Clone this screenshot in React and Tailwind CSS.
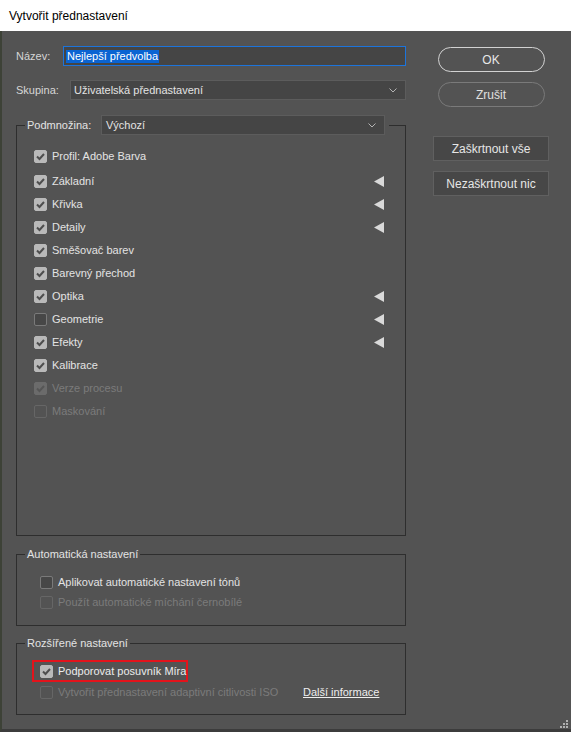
import React from "react";

const font = "font-['Liberation_Sans',Arial,sans-serif]";

function Check({ checked, disabled }) {
  let box = "bg-[#b9b9b9] border border-[#b9b9b9]";
  let stroke = "#4e4e4e";
  if (!checked && !disabled) box = "bg-[#474747] border border-[#7a7a7a]";
  if (checked && disabled) {
    box = "bg-[#6b6b6b] border border-[#6b6b6b]";
    stroke = "#565656";
  }
  if (!checked && disabled) box = "border border-[#666666]";
  return (
    <span className={`w-[13px] h-[13px] rounded-[2px] flex items-center justify-center shrink-0 ${box}`}>
      {checked && (
        <svg width="11" height="11" viewBox="0 0 11 11">
          <polyline points="2,5.5 4.5,8 9,3" fill="none" stroke={stroke} strokeWidth="2" />
        </svg>
      )}
    </span>
  );
}

function Chevron() {
  return (
    <svg width="8" height="5" viewBox="0 0 8 5" className="shrink-0">
      <polyline points="0.5,0.5 4,4 7.5,0.5" fill="none" stroke="#b4b4b4" strokeWidth="1" />
    </svg>
  );
}

function Triangle() {
  return (
    <svg width="10" height="11" viewBox="0 0 10 11" className="ml-auto">
      <polygon points="10,0 10,11 0,5.5" fill="#d9d9d9" />
    </svg>
  );
}

const subset = [
  { label: "Profil: Adobe Barva", checked: true },
  { label: "Základní", checked: true, arrow: true },
  { label: "Křivka", checked: true, arrow: true },
  { label: "Detaily", checked: true, arrow: true },
  { label: "Směšovač barev", checked: true },
  { label: "Barevný přechod", checked: true },
  { label: "Optika", checked: true, arrow: true },
  { label: "Geometrie", checked: false, arrow: true },
  { label: "Efekty", checked: true, arrow: true },
  { label: "Kalibrace", checked: true },
  { label: "Verze procesu", checked: true, disabled: true },
  { label: "Maskování", checked: false, disabled: true },
];

export default function App() {
  return (
    <div className={`w-[571px] h-[732px] bg-[#535353] flex flex-col text-[11px] text-[#e3e3e3] whitespace-nowrap ${font}`}>
      {/* Title bar */}
      <div className="h-[31px] bg-white flex items-center pl-[9px] text-[12px] text-black shrink-0">
        Vytvořit přednastavení
      </div>

      <div className="flex flex-1 border-l-2 border-l-[#3d4237] border-b-[3px] border-b-[#3c3c3c] relative">
        {/* Left column */}
        <div className="w-[404px] pl-[14px] flex flex-col">
          <div className="mt-[15px] h-[20px] flex items-center">
            <span className="w-[47px] text-[#d6d6d6]">Název:</span>
            <div className="flex-1 h-[20px] border border-[#1c74dc] bg-[#454545] flex items-center pl-[2px]">
              <span className="bg-[#0a64d2] text-white leading-[13px] px-[1px]">Nejlepší předvolba</span>
            </div>
          </div>

          <div className="mt-[14px] h-[20px] flex items-center">
            <span className="w-[54px] text-[#d6d6d6]">Skupina:</span>
            <div className="flex-1 h-[20px] border border-[#5c5c5c] bg-[#454545] flex items-center pl-[3px] pr-[8px]">
              <span className="flex-1">Uživatelská přednastavení</span>
              <Chevron />
            </div>
          </div>

          {/* Podmnožina */}
          <fieldset className="mt-[15px] h-[421px] border border-[#2e2e2e] min-w-0">
            <legend className="ml-[8px] px-[2px] w-[364px] h-[20px] flex items-center">
              <span className="w-[74px]">Podmnožina:</span>
              <div className="w-[284px] h-[20px] border border-[#5c5c5c] bg-[#454545] flex items-center pl-[4px] pr-[8px]">
                <span className="flex-1">Výchozí</span>
                <Chevron />
              </div>
            </legend>
            <div className="pt-[10px] pl-[17px] pr-[21px] flex flex-col">
              {subset.map((r, i) => (
                <div key={r.label} className={`h-[23px] flex items-center ${i === 0 ? "mb-[2px]" : ""}`}>
                  <Check checked={r.checked} disabled={r.disabled} />
                  <span className={`ml-[5px] ${r.disabled ? "text-[#7b7b7b]" : ""}`}>{r.label}</span>
                  {r.arrow && <Triangle />}
                </div>
              ))}
            </div>
          </fieldset>

          {/* Automatická nastavení */}
          <fieldset className="mt-[12px] h-[78px] border border-[#2e2e2e] min-w-0">
            <legend className="ml-[8px] px-[2px] h-[13px] leading-[13px]">Automatická nastavení</legend>
            <div className="pt-[11px] pl-[23px] flex flex-col">
              <div className="h-[20px] flex items-center">
                <Check checked={false} />
                <span className="ml-[5px]">Aplikovat automatické nastavení tónů</span>
              </div>
              <div className="h-[20px] flex items-center">
                <Check checked={false} disabled />
                <span className="ml-[5px] text-[#7b7b7b]">Použít automatické míchání černobílé</span>
              </div>
            </div>
          </fieldset>

          {/* Rozšířené nastavení */}
          <fieldset className="mt-[11px] h-[78px] border border-[#2e2e2e] min-w-0">
            <legend className="ml-[8px] px-[2px] h-[13px] leading-[13px]">Rozšířené nastavení</legend>
            <div className="pt-[10px] pl-[15px] flex flex-col">
              <div className="w-[156px] h-[22px] border-2 border-[#e3131b] flex items-center pl-[6px]">
                <Check checked />
                <span className="ml-[5px] text-[#ececec]">Podporovat posuvník Míra</span>
              </div>
              <div className="h-[20px] flex items-center pl-[8px]">
                <Check checked={false} disabled />
                <span className="ml-[5px] w-[245px] text-[#7b7b7b]">Vytvořit přednastavení adaptivní citlivosti ISO</span>
                <span className="underline text-[#eeeeee]">Další informace</span>
              </div>
            </div>
          </fieldset>
        </div>

        {/* Right column */}
        <div className="ml-[27px] w-[116px] flex flex-col items-center text-[12px]">
          <button className="mt-[16px] w-[107px] h-[25px] rounded-full border-[1.5px] border-[#d2d2d2] text-[#e8e8e8]">
            OK
          </button>
          <button className="mt-[10px] w-[107px] h-[25px] rounded-full border border-[#7a7a7a] text-[#e0e0e0]">
            Zrušit
          </button>
          <button className="mt-[29px] w-[116px] h-[25px] bg-[#474747] border border-[#606060] text-[#e6e6e6]">
            Zaškrtnout vše
          </button>
          <button className="mt-[10px] w-[116px] h-[25px] bg-[#474747] border border-[#606060] text-[#e6e6e6]">
            Nezaškrtnout nic
          </button>
        </div>

        {/* Resize grip */}
        <svg width="8" height="8" viewBox="0 0 8 8" className="absolute right-[3px] bottom-[1px]">
          <rect x="6" y="0" width="2" height="2" fill="#b0b0b0" />
          <rect x="3" y="3" width="2" height="2" fill="#b0b0b0" />
          <rect x="6" y="3" width="2" height="2" fill="#b0b0b0" />
          <rect x="0" y="6" width="2" height="2" fill="#b0b0b0" />
          <rect x="3" y="6" width="2" height="2" fill="#b0b0b0" />
          <rect x="6" y="6" width="2" height="2" fill="#b0b0b0" />
        </svg>
      </div>
    </div>
  );
}
